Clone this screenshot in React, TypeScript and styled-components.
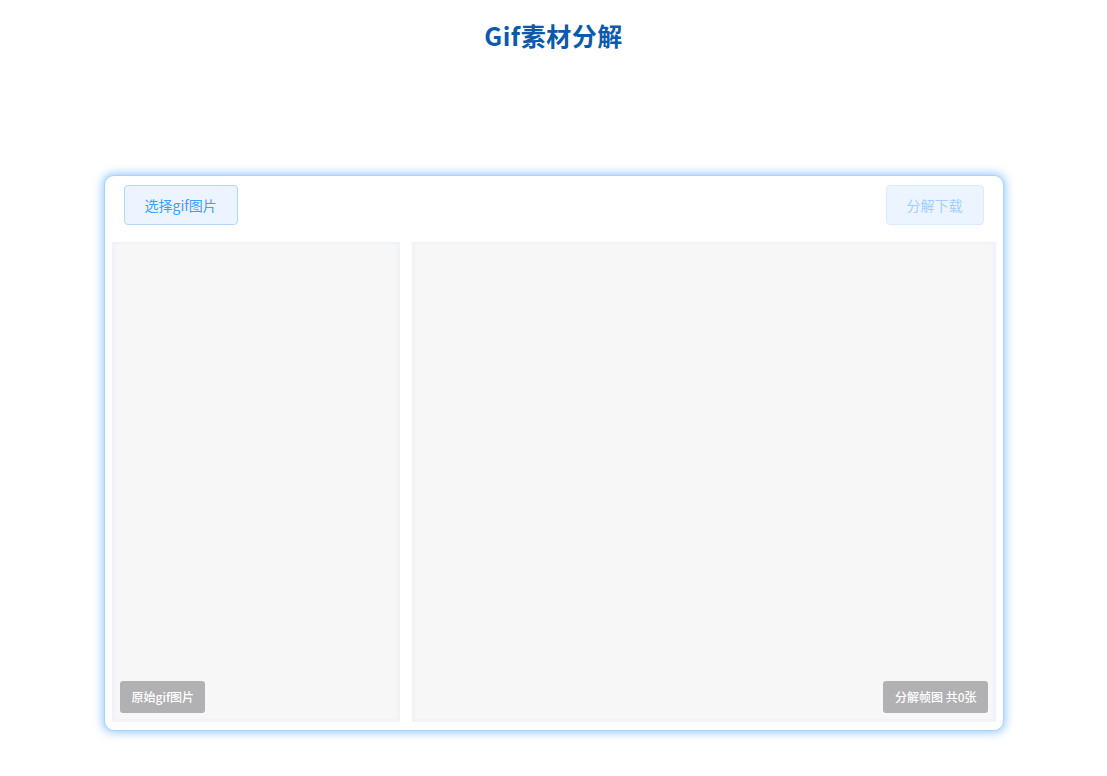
import styled, { createGlobalStyle } from 'styled-components';

const GlobalStyle = createGlobalStyle`
  body {
    margin: 0;
    background: #ffffff;
    font-family: "Liberation Sans", "Noto Sans CJK SC", sans-serif;
  }
`;

const Page = styled.div`
  width: 1107px;
  min-height: 776px;
  display: flex;
  flex-direction: column;
  align-items: center;
`;

const Title = styled.h1`
  margin: 19px 0 0;
  height: 32px;
  line-height: 32px;
  font-size: 25px;
  letter-spacing: 0.5px;
  font-weight: bold;
  color: #0b5aab;
  font-family: "Noto Sans CJK SC", sans-serif;
`;

const Card = styled.div`
  margin-top: 124px;
  width: 900px;
  height: 556px;
  box-sizing: border-box;
  background: #ffffff;
  border: 1px solid #a9d3ff;
  border-radius: 10px;
  box-shadow: 0 0 8px 2px rgba(64, 158, 255, 0.5);
  padding: 9px 7px 8px;
  display: flex;
  flex-direction: column;
`;

const Toolbar = styled.div`
  display: flex;
  justify-content: space-between;
  padding: 0 12px;
  height: 40px;
`;

const Button = styled.button<{ disabled?: boolean }>`
  height: 40px;
  padding: 0 20px;
  box-sizing: border-box;
  border-radius: 4px;
  font-size: 14px;
  font-family: "Noto Sans CJK SC", sans-serif;
  background: #ecf5ff;
  border: 1px solid ${({ disabled }) => (disabled ? '#d9ecff' : '#b3d8ff')};
  color: ${({ disabled }) => (disabled ? '#a0cfff' : '#409eff')};
  cursor: ${({ disabled }) => (disabled ? 'not-allowed' : 'pointer')};
`;

const Panels = styled.div`
  margin-top: 17px;
  flex: 1;
  display: flex;
  gap: 12px;
`;

const Panel = styled.div<{ width: number; side: 'left' | 'right' }>`
  width: ${({ width }) => width}px;
  box-sizing: border-box;
  background: #f7f7f7;
  border: 3px solid #f2f3f8;
  display: flex;
  align-items: flex-end;
  justify-content: ${({ side }) => (side === 'left' ? 'flex-start' : 'flex-end')};
  padding: 0 5px 6px;
`;

const Label = styled.span`
  height: 32px;
  line-height: 32px;
  padding: 0 11px 0 12px;
  border-radius: 3px;
  background: #b1b1b4;
  color: #ffffff;
  font-size: 12px;
  font-family: "Noto Sans CJK SC", sans-serif;
  font-weight: 500;
`;

export default function App() {
  return (
    <>
      <GlobalStyle />
      <Page>
        <Title>Gif素材分解</Title>
        <Card>
          <Toolbar>
            <Button>选择gif图片</Button>
            <Button disabled>分解下载</Button>
          </Toolbar>
          <Panels>
            <Panel width={288} side="left">
              <Label>原始gif图片</Label>
            </Panel>
            <Panel width={584} side="right">
              <Label>分解帧图 共0张</Label>
            </Panel>
          </Panels>
        </Card>
      </Page>
    </>
  );
}
